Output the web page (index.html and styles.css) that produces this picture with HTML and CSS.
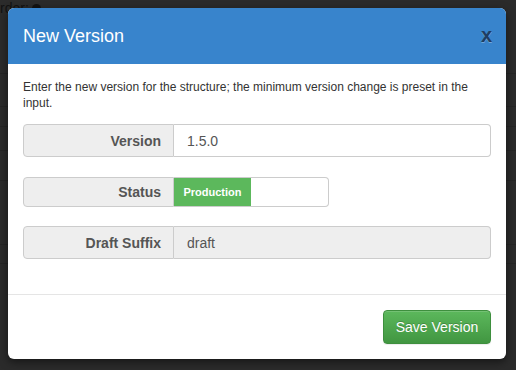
FILE: index.html
```html
<!DOCTYPE html>
<html lang="en">
<head>
    <meta charset="UTF-8">
    <title>New Version</title>
    <link rel="stylesheet" href="styles.css">
</head>
<body>
    <div class="page">
        <div class="crumb">rder: <span class="dot"></span></div>
        <div class="row-line" style="height:58px"></div>
        <div class="row-line" style="height:32px"></div>
        <div class="row-line" style="height:19px"></div>
        <div class="row-line" style="height:23px"></div>
        <div class="row-line" style="height:29px"></div>
        <div class="row-line" style="height:63px"></div>
        <div class="row-line" style="height:18px"></div>
    </div>

    <div class="modal">
        <div class="modal-header">
            <h4 class="modal-title">New Version</h4>
            <span class="close">x</span>
        </div>
        <div class="modal-body">
            <p class="intro">Enter the new version for the structure; the minimum version change is preset in the input.</p>

            <div class="input-group">
                <span class="addon">Version</span>
                <div class="field">1.5.0</div>
            </div>

            <div class="input-group">
                <span class="addon short">Status</span>
                <div class="switch">
                    <span class="switch-on">Production</span>
                    <span class="switch-off"></span>
                </div>
            </div>

            <div class="input-group">
                <span class="addon">Draft Suffix</span>
                <div class="field disabled">draft</div>
            </div>
        </div>
        <div class="modal-footer">
            <button class="btn-success">Save Version</button>
        </div>
    </div>
</body>
</html>
```

FILE: styles.css
```css
body {
    margin: 0;
    background-color: #2b2b2b;
    font-family: "Liberation Sans", Arial, sans-serif;
    color: #333;
}

.page {
    height: 370px;
    overflow: hidden;
}
.crumb {
    color: #121212;
    font-size: 14px;
    line-height: 14px;
    padding-top: 1px;
    display: flex;
    align-items: center;
    gap: 3px;
}
.dot {
    width: 9px;
    height: 9px;
    border-radius: 50%;
    background-color: #121212;
}
.row-line {
    border-bottom: 1px solid #252525;
}

.modal {
    position: absolute;
    top: 8px;
    left: 8px;
    width: 498px;
    background-color: white;
    border-radius: 6px;
    overflow: hidden;
    box-shadow: 0 3px 9px rgba(0,0,0,.5);
}

.modal-header {
    background-color: #3884cc;
    height: 56px;
    padding: 0 14px 0 15px;
    display: flex;
    align-items: center;
    justify-content: space-between;
}
.modal-title {
    margin: 0;
    color: white;
    font-size: 18px;
    font-weight: normal;
}
.close {
    color: #1f3d62;
    font-size: 20px;
    font-weight: bold;
    line-height: 1;
    text-shadow: 0 1px 0 rgba(255,255,255,.3);
    margin-top: -2px;
}

.modal-body {
    padding: 15px 15px 35px;
}
.intro {
    margin: 0 0 13px;
    font-size: 12px;
    line-height: 16px;
}

.input-group {
    display: flex;
    margin-bottom: 20px;
}
.input-group:last-child {
    margin-bottom: 0;
    margin-top: -1px;
}
.addon {
    width: 137px;
    padding-right: 12px;
    background-color: #eee;
    border: 1px solid #ccc;
    border-radius: 4px 0 0 4px;
    color: #555;
    font-size: 14px;
    font-weight: bold;
    display: flex;
    align-items: center;
    justify-content: flex-end;
    height: 31px;
}
.addon.short {
    height: 28px;
}
.field {
    flex: 1;
    border: 1px solid #ccc;
    border-left: none;
    border-radius: 0 4px 4px 0;
    height: 31px;
    padding-left: 13px;
    font-size: 14px;
    color: #555;
    display: flex;
    align-items: center;
}
.field.disabled {
    background-color: #eee;
}

.switch {
    display: flex;
    border: 1px solid #ccc;
    border-left: none;
    border-radius: 0 4px 4px 0;
    height: 28px;
    padding: 0;
}
.switch-on {
    width: 77px;
    background-color: #5cb85c;
    color: white;
    font-size: 11px;
    font-weight: bold;
    display: flex;
    align-items: center;
    justify-content: center;
}
.switch-off {
    width: 77px;
}

.modal-footer {
    border-top: 1px solid #e5e5e5;
    padding: 15px;
    display: flex;
    justify-content: flex-end;
}
.btn-success {
    width: 108px;
    height: 34px;
    background-image: linear-gradient(to bottom, #5cb85c 0, #419641 100%);
    border: 1px solid #3e8f3e;
    border-radius: 4px;
    color: white;
    font-family: "Liberation Sans", Arial, sans-serif;
    font-size: 14px;
    text-shadow: 0 -1px 0 rgba(0,0,0,.2);
    box-shadow: inset 0 1px 0 rgba(255,255,255,.15), 0 1px 1px rgba(0,0,0,.075);
    padding: 0;
}
```
